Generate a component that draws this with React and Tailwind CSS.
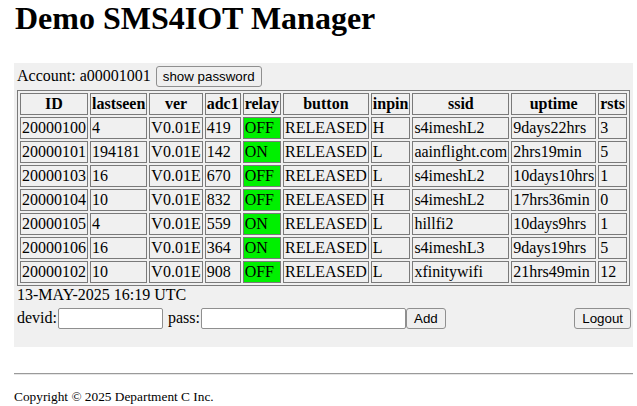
import React from "react";

const rows = [
  ["20000100", "4", "V0.01E", "419", "OFF", "RELEASED", "H", "s4imeshL2", "9days22hrs", "3"],
  ["20000101", "194181", "V0.01E", "142", "ON", "RELEASED", "L", "aainflight.com", "2hrs19min", "5"],
  ["20000103", "16", "V0.01E", "670", "OFF", "RELEASED", "L", "s4imeshL2", "10days10hrs", "1"],
  ["20000104", "10", "V0.01E", "832", "OFF", "RELEASED", "H", "s4imeshL2", "17hrs36min", "0"],
  ["20000105", "4", "V0.01E", "559", "ON", "RELEASED", "L", "hillfi2", "10days9hrs", "1"],
  ["20000106", "16", "V0.01E", "364", "ON", "RELEASED", "L", "s4imeshL3", "9days19hrs", "5"],
  ["20000102", "10", "V0.01E", "908", "OFF", "RELEASED", "L", "xfinitywifi", "21hrs49min", "12"],
];

const headers = ["ID", "lastseen", "ver", "adc1", "relay", "button", "inpin", "ssid", "uptime", "rsts"];

function Btn({ children, className = "" }) {
  return (
    <button
      className={
        "h-[21px] px-[6px] bg-[#efefef] border border-[#8f8f8f] rounded-[3px] font-['Liberation_Sans',Arial,sans-serif] text-[13.333px] leading-[15px] text-black " +
        className
      }
    >
      {children}
    </button>
  );
}

export default function App() {
  return (
    <div className="w-[637px] h-[406px] bg-white text-black font-['Liberation_Serif','Times_New_Roman',serif] text-[16px] leading-[18px] overflow-hidden">
      <div className="ml-[14px] w-[619px]">
        <h1 className="text-[32px] leading-[36px] font-bold m-0 pl-[1px]">Demo SMS4IOT Manager</h1>

        <div className="mt-[27px] bg-[#f0f0f0] pt-[2px] px-[3px] pb-[18px]">
          <div className="flex items-center h-[22px] gap-[5px]">
            <span>Account: a00001001</span>
            <Btn>show password</Btn>
          </div>

          <table className="mt-[3px] border-separate border-spacing-[2px] border border-[#7a7a7a]">
            <thead>
              <tr>
                {headers.map((h) => (
                  <th key={h} className="border border-[#7a7a7a] p-[1px] font-bold text-center leading-[18px]">
                    {h}
                  </th>
                ))}
              </tr>
            </thead>
            <tbody>
              {rows.map((r) => (
                <tr key={r[0]}>
                  {r.map((c, i) => (
                    <td
                      key={i}
                      className={
                        i === 4
                          ? "border border-[#7a7a7a] p-[1px] text-left whitespace-nowrap leading-[18px] bg-[#00f000]"
                          : "border border-[#7a7a7a] p-[1px] text-left whitespace-nowrap leading-[18px]"
                      }
                    >
                      {c}
                    </td>
                  ))}
                </tr>
              ))}
            </tbody>
          </table>

          <div className="h-[18px]">13-MAY-2025 16:19 UTC</div>

          <div className="mt-[3px] flex items-center h-[22px]">
            <span>devid:</span>
            <input className="ml-[1px] w-[105px] h-[21px] bg-white border border-[#8f8f8f] rounded-[2px] px-[2px]" />
            <span className="ml-[5px]">pass:</span>
            <input className="ml-[1px] w-[205px] h-[21px] bg-white border border-[#8f8f8f] rounded-[2px] px-[2px]" />
            <Btn className="px-[7px]">Add</Btn>
            <Btn className="ml-auto mr-[-1px] px-[7px]">Logout</Btn>
          </div>
        </div>

        <div className="mt-[26px] h-[2px] border-t border-[#9a9a9a] border-b border-b-[#e6e6e6]" />

        <div className="mt-[14px] text-[13.333px] leading-[15px]">Copyright © 2025 Department C Inc.</div>
      </div>
    </div>
  );
}
